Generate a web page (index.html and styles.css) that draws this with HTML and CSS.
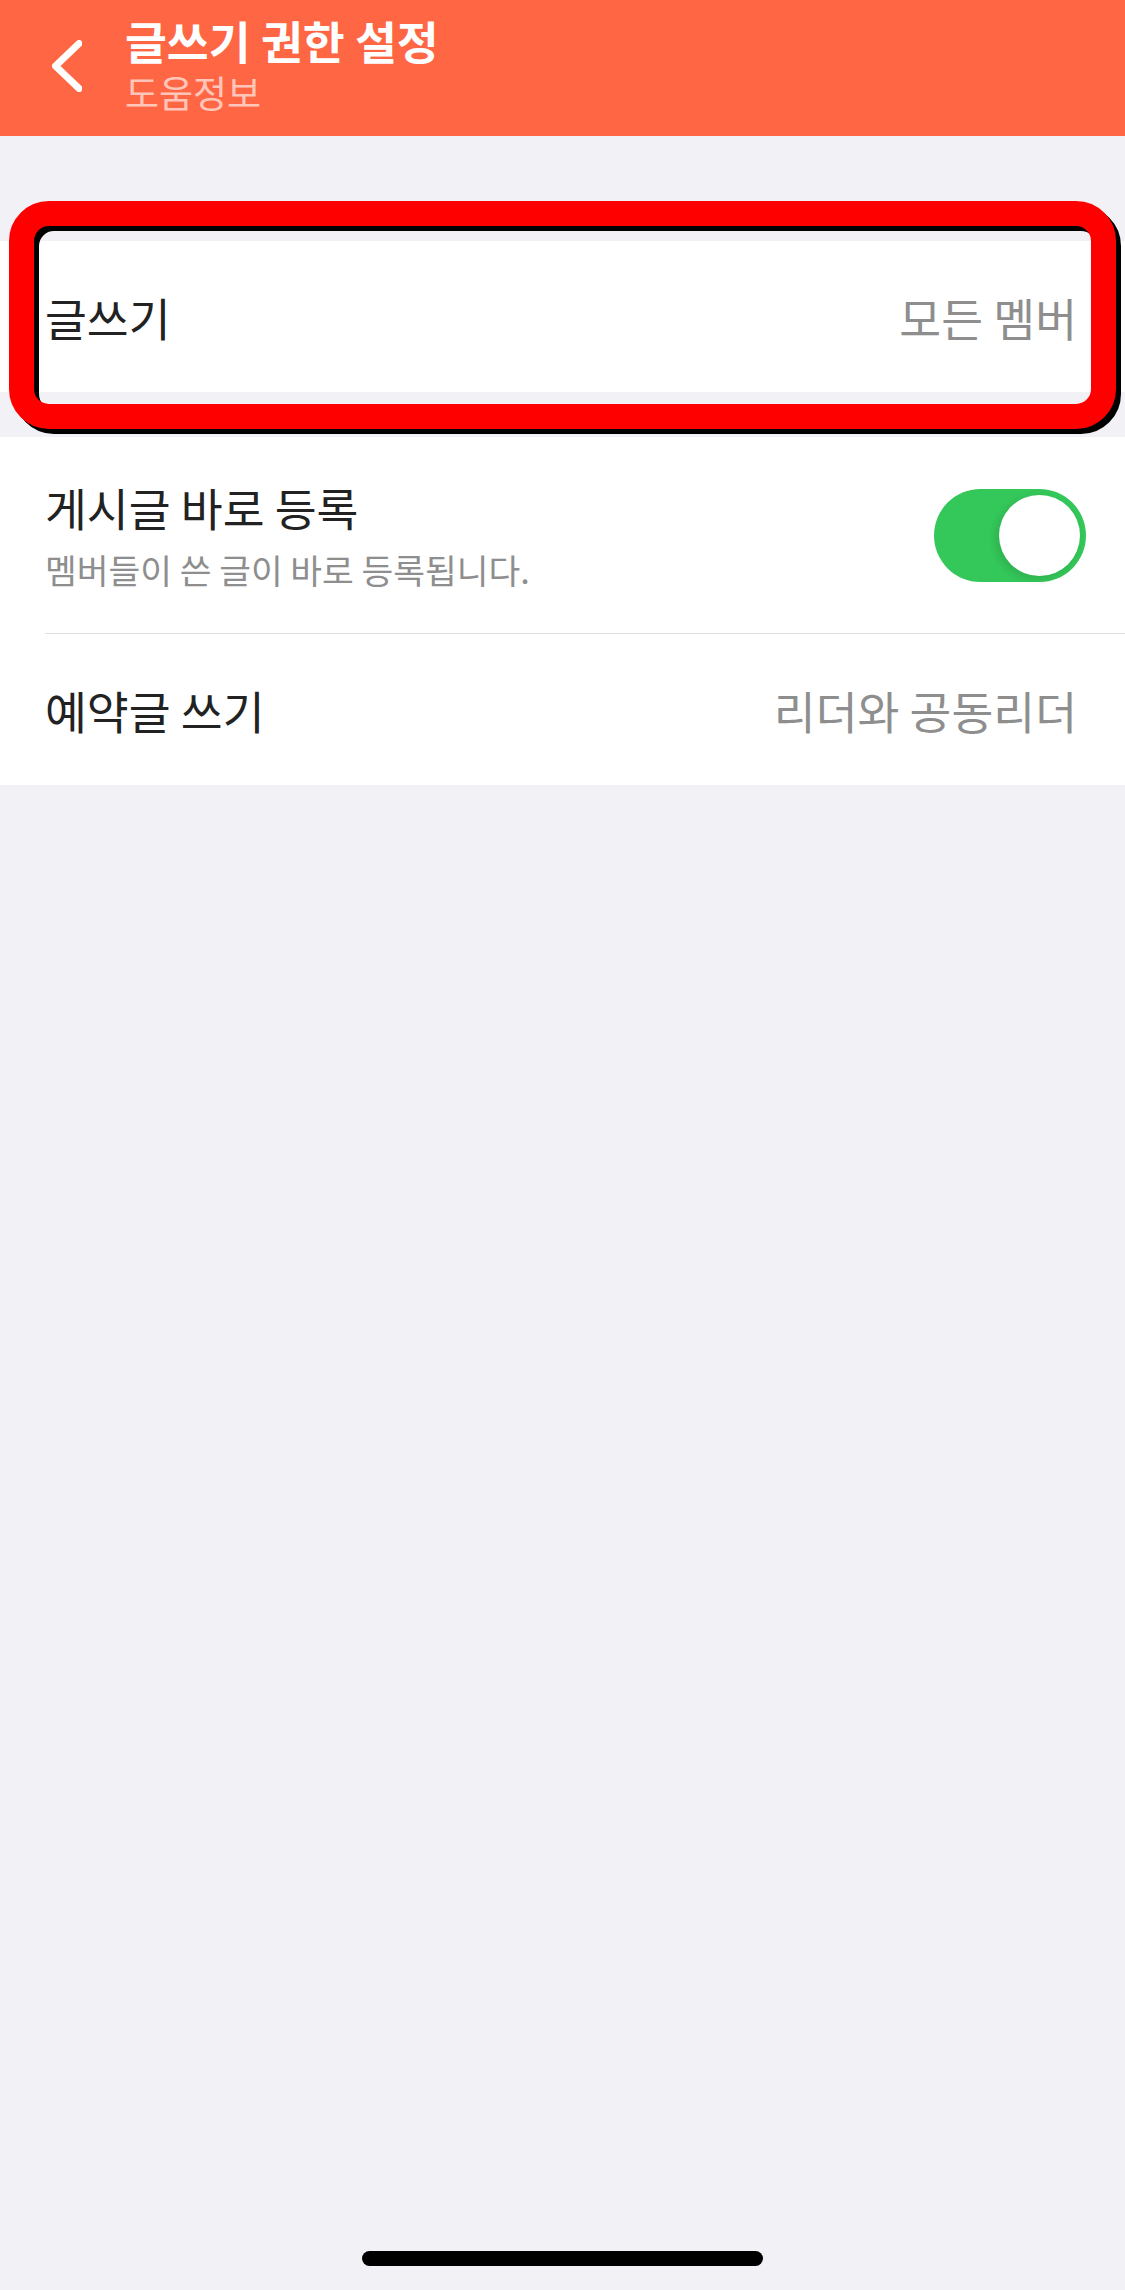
FILE: index.html
```html
<!DOCTYPE html>
<html>
<head>
	<meta charset="utf-8">
	<title>글쓰기 권한 설정</title>
	<link rel="stylesheet" href="styles.css">
</head>
<body>

	<div class="page">

		<div class="nav">
			<a href="#" class="nav-back">
				<svg width="30" height="52" viewBox="0 0 30 52">
					<path d="M27 3.5 L3.5 26 L27 48.5" fill="none" stroke="#fff" stroke-width="7" stroke-linecap="round" stroke-linejoin="round"/>
				</svg>
			</a>
			<div class="nav-title">
				<div class="nav-title-main">글쓰기 권한 설정</div>
				<div class="nav-title-sub">도움정보</div>
			</div>
		</div>

		<div class="group group-first">
			<div class="row">
				<span class="row-label">글쓰기</span>
				<span class="row-value">모든 멤버</span>
			</div>
			<div class="mark"></div>
		</div>

		<div class="group">
			<div class="row row-tall">
				<div class="row-text">
					<div class="row-label">게시글 바로 등록</div>
					<div class="row-desc">멤버들이 쓴 글이 바로 등록됩니다.</div>
				</div>
				<div class="switch switch-on">
					<span class="switch-knob"></span>
				</div>
			</div>
			<div class="line"></div>
			<div class="row">
				<span class="row-label">예약글 쓰기</span>
				<span class="row-value">리더와 공동리더</span>
			</div>
		</div>

		<div class="home-bar"></div>
	</div>

</body>
</html>
```

FILE: styles.css
```css
body {
	margin: 0px;
	padding: 0px;
	background: #f1f1f6;
	font-family: "Noto Sans CJK KR", "Noto Sans", sans-serif;
	color: #222;
}

.page {
	width: 1125px;
	height: 2290px;
	display: flex;
	flex-direction: column;
}

.nav {
	height: 136px;
	background: #ff6644;
	display: flex;
	align-items: flex-start;
	flex-shrink: 0;
}

.nav-back {
	display: block;
	width: 30px;
	height: 52px;
	margin: 40px 0 0 52px;
}

.nav-back svg {
	display: block;
}

.nav-title {
	margin-left: 43px;
	padding-top: 15px;
}

.nav-title-main {
	font-size: 45.5px;
	line-height: 50px;
	font-weight: 700;
	color: #fff;
}

.nav-title-sub {
	margin-top: 7px;
	font-size: 37px;
	line-height: 40px;
	color: rgba(255, 255, 255, 0.65);
}

.group {
	background: #fff;
	margin-top: 45px;
}

.group-first {
	margin-top: 105px;
	position: relative;
}

.row {
	height: 151px;
	padding: 0 48px 0 45px;
	display: flex;
	align-items: center;
	justify-content: space-between;
}

.row-tall {
	height: 196px;
	padding-right: 39px;
}

.row-label {
	font-size: 45.5px;
	line-height: 50px;
}

.row-value {
	font-size: 45.5px;
	line-height: 50px;
	color: #8e8e8e;
}

.row-desc {
	margin-top: 17px;
	font-size: 34.5px;
	line-height: 40px;
	color: #8e8e8e;
}

.line {
	height: 1px;
	margin-left: 45px;
	background: #e0e0e0;
}

.switch {
	width: 152px;
	height: 93px;
	box-sizing: border-box;
	padding: 6px;
	border-radius: 47px;
	background: #e9e9eb;
	display: flex;
}

.switch-on {
	background: #34c759;
	justify-content: flex-end;
}

.switch-knob {
	width: 81px;
	height: 81px;
	border-radius: 50%;
	background: #fff;
	box-shadow: -3px 3px 8px rgba(0, 0, 0, 0.12);
}

/* 红框标注 */
.mark {
	position: absolute;
	top: -40px;
	left: 9px;
	right: 9px;
	height: 228px;
	box-sizing: border-box;
	border: 25px solid #ff0000;
	border-radius: 40px;
	filter: drop-shadow(5px 5px 0 #000);
}

.home-bar {
	width: 401px;
	height: 15px;
	border-radius: 8px;
	background: #000;
	margin: auto auto 24px auto;
}
```
